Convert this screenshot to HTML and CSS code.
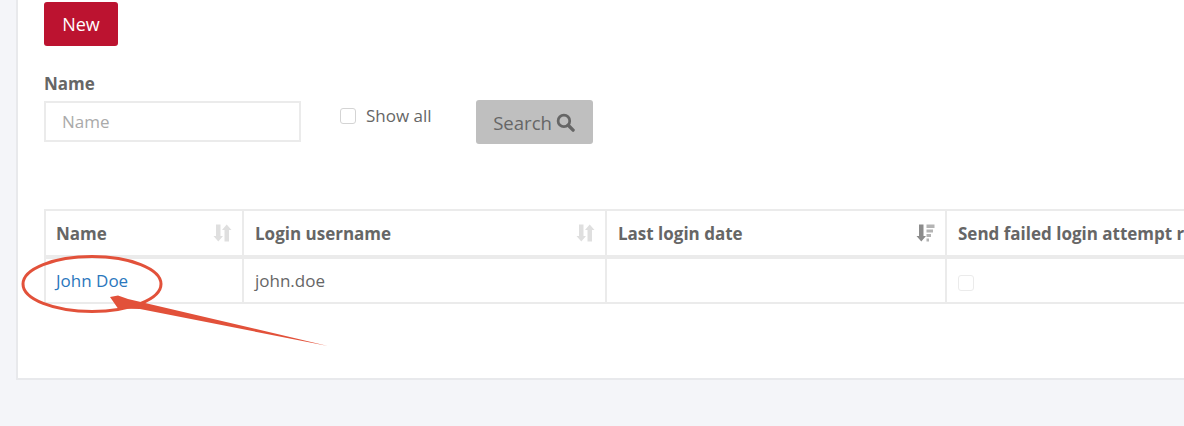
FILE: index.html
```html
<!DOCTYPE html>
<html lang="en">
<head>
  <meta charset="UTF-8" />
  <meta name="viewport" content="width=device-width, initial-scale=1" />
  <title>Users</title>
  <link rel="stylesheet" href="styles.css">
</head>
<body>

<div class="panel">
  <button class="btn-new">New</button>

  <form class="filters">
    <div class="field">
      <label class="field-label">Name</label>
      <input class="text-input" type="text" placeholder="Name" />
    </div>
    <label class="show-all"><span class="checkbox"></span>Show all</label>
    <button class="btn-search" type="button">Search
      <svg class="search-icon" width="19" height="19" viewBox="0 0 18 18"><circle cx="7.500" cy="7.500" r="5.500" fill="none" stroke="#666" stroke-width="2.600"/><path d="M11.600 11.600L16.200 16.200" stroke="#666" stroke-width="3.200" stroke-linecap="round"/></svg>
    </button>
  </form>

  <table class="users">
    <thead>
      <tr>
        <th class="col-name"><div class="th-inner">Name
          <svg class="sort" width="19" height="18" viewBox="0 0 18 18"><path d="M2.500 0.500h4.500v11.500h2.500l-4.700 5.500L0 12h2.500zM11 17.500V6H8.500L13.200.5 18 6h-2.500v11.500z" fill="#dfdfdf"/></svg>
        </div></th>
        <th class="col-login"><div class="th-inner">Login username
          <svg class="sort" width="19" height="18" viewBox="0 0 18 18"><path d="M2.500 0.500h4.500v11.500h2.500l-4.700 5.500L0 12h2.500zM11 17.500V6H8.500L13.200.5 18 6h-2.500v11.500z" fill="#dfdfdf"/></svg>
        </div></th>
        <th class="col-date"><div class="th-inner">Last login date
          <svg class="sort" width="19" height="18" viewBox="0 0 18 18"><path d="M2.500 0.500h4.500v11.500h2.500l-4.700 5.500L0 12h2.500z" fill="#8c8c8c"/><path d="M10 .5h8v3.500h-8zM10 5.500h6.500v3H10zM10 10h4.500v3H10zM10 14.500h2.500v3H10z" fill="#b4b4b4"/></svg>
        </div></th>
        <th class="col-failed"><div class="th-inner">Send failed login attempt r</div></th>
      </tr>
    </thead>
    <tbody>
      <tr>
        <td><a class="user-link" href="#">John Doe</a></td>
        <td>john.doe</td>
        <td></td>
        <td><span class="checkbox checkbox-off"></span></td>
      </tr>
    </tbody>
  </table>
</div>

<svg class="markup" width="400" height="140" viewBox="0 0 400 140">
  <ellipse cx="92" cy="44" rx="69" ry="27.500" fill="none" stroke="#e2513a" stroke-width="3"/>
  <path d="M110 57L118 55.500L128 59L328 106L140 69L118 68.500z" fill="#e2513a"/>
</svg>

</body>
</html>
```

FILE: styles.css
```css
html, body {
  height: 100%;
}
body {
  margin: 0;
  overflow: hidden;
  position: relative;
  background: #f4f5f9;
  font-family: 'Open Sans', sans-serif;
  font-size: 17px;
  color: #666;
}
.panel {
  box-sizing: border-box;
  margin-left: 16px;
  height: 380px;
  padding: 2px 0 0 26px;
  background: #fff;
  border-left: 2px solid #e8e9ec;
  border-bottom: 2px solid #e8e9ec;
}
.btn-new {
  display: block;
  width: 74px;
  height: 44px;
  padding: 0;
  border: none;
  border-radius: 3px;
  background: #bc1330;
  color: #fff;
  font-family: inherit;
  font-size: 18px;
}
.filters {
  display: flex;
  align-items: flex-start;
  margin-top: 26px;
}
.field {
  width: 257px;
}
.field-label {
  display: block;
  font-weight: 700;
  line-height: 24px;
  margin-bottom: 5px;
}
.text-input {
  display: block;
  box-sizing: border-box;
  width: 100%;
  height: 41px;
  padding: 0 16px;
  border: 2px solid #ebebeb;
  font-family: inherit;
  font-size: 17px;
  color: #666;
}
.text-input::placeholder {
  color: #aaa;
}
.show-all {
  display: flex;
  align-items: center;
  gap: 10px;
  margin: 32px 0 0 39px;
  line-height: 24px;
}
.checkbox {
  display: inline-block;
  box-sizing: border-box;
  width: 16px;
  height: 16px;
  border: 1px solid #d4d4d4;
  border-radius: 3px;
  background: #fff;
}
.checkbox-off {
  border-color: #ebebeb;
  display: block;
  margin-top: 5px;
}
.btn-search {
  display: flex;
  align-items: center;
  justify-content: center;
  gap: 4px;
  width: 117px;
  height: 44px;
  margin: 28px 0 0 44px;
  padding: 0;
  border: none;
  border-radius: 3px;
  background: #bfbfbf;
  color: #666;
  font-family: inherit;
  font-size: 18.6px;
}
.users {
  margin-top: 65px;
  border-collapse: collapse;
  table-layout: fixed;
  width: 1300px;
}
.users th,
.users td {
  box-sizing: border-box;
  border: 2px solid #ebebeb;
  text-align: left;
  padding: 0 10px;
}
.users th + th,
.users td + td {
  padding-left: 11px;
}
.users th {
  height: 47px;
  border-bottom-width: 4px;
  font-weight: 700;
  white-space: nowrap;
}
.users td {
  height: 46px;
}
.col-name { width: 198px; }
.col-login { width: 363px; }
.col-date { width: 340px; }
.th-inner {
  display: flex;
  align-items: center;
  justify-content: space-between;
}
.user-link {
  color: #2a77bd;
  text-decoration: none;
}
.markup {
  position: absolute;
  left: 0;
  top: 240px;
}
```
